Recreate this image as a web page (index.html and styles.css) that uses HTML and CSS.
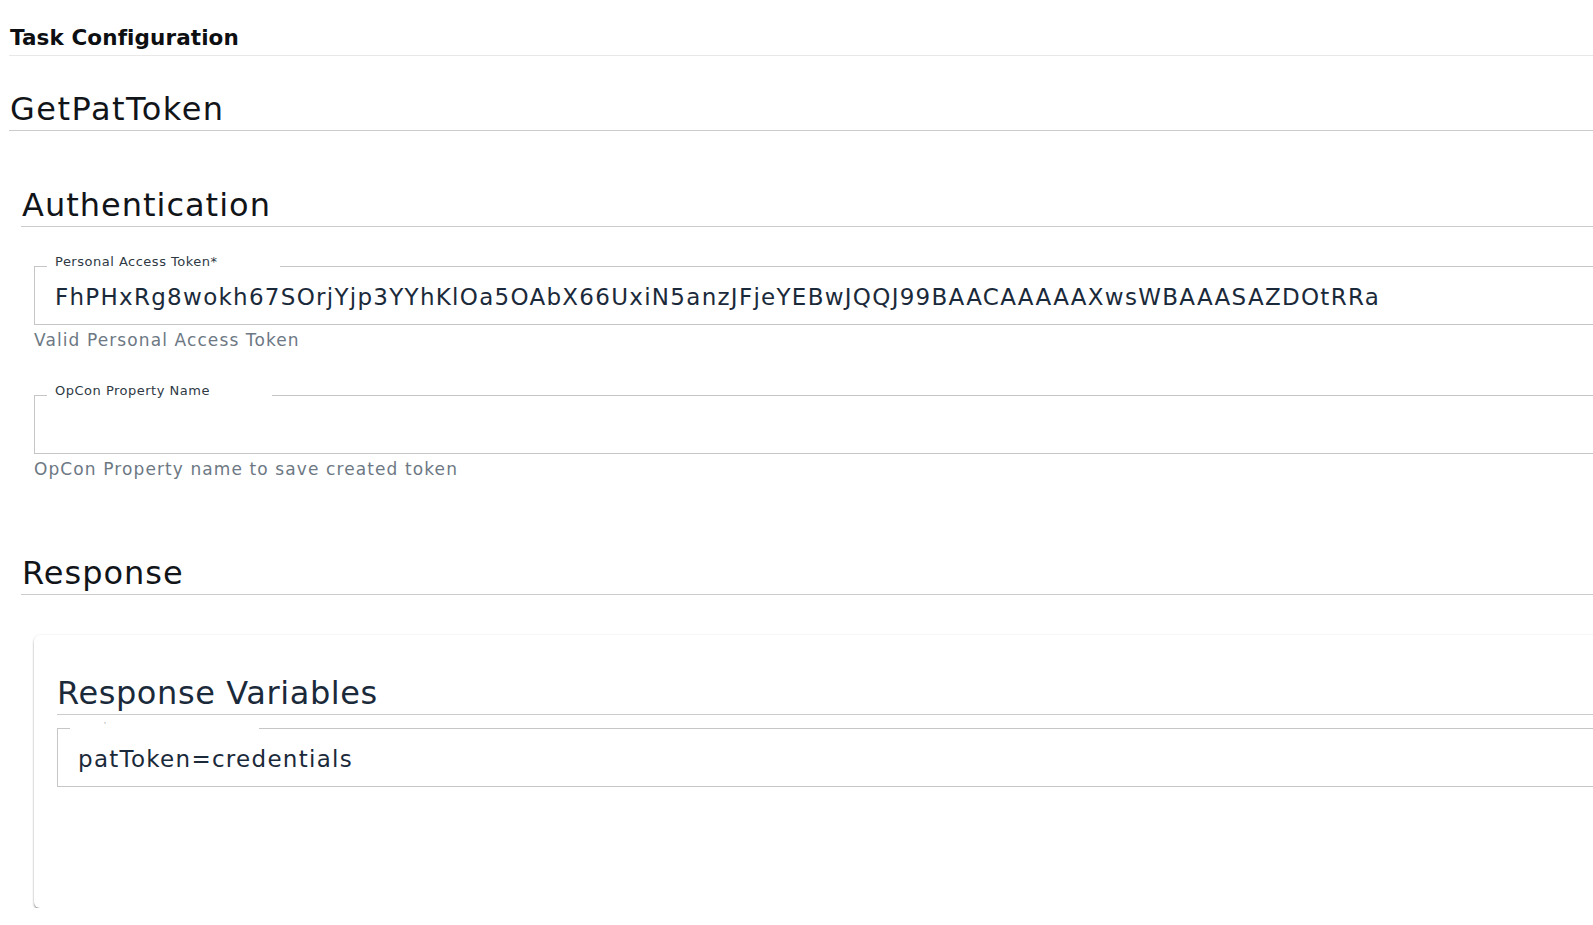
FILE: index.html
```html
<!DOCTYPE html>
<html lang="en">
<head>
<meta charset="utf-8">
<title>Task Configuration</title>
<link rel="stylesheet" href="styles.css">
</head>
<body>
<div class="page">
  <div class="page-title">Task Configuration</div>
  <h1 class="task-name">GetPatToken</h1>

  <section class="section">
    <h2 class="section-title">Authentication</h2>
    <div class="form-item">
      <div class="field">
        <span class="field-label label-pat">Personal Access Token*</span>
        <span class="field-value">FhPHxRg8wokh67SOrjYjp3YYhKlOa5OAbX66UxiN5anzJFjeYEBwJQQJ99BAACAAAAAXwsWBAAASAZDOtRRa</span>
      </div>
      <div class="hint">Valid Personal Access Token</div>
    </div>
    <div class="form-item form-item-2">
      <div class="field">
        <span class="field-label label-prop">OpCon Property Name</span>
        <span class="field-value"></span>
      </div>
      <div class="hint">OpCon Property name to save created token</div>
    </div>
  </section>

  <section class="section section-response">
    <h2 class="section-title">Response</h2>
    <div class="card">
      <h3 class="card-title">Response Variables</h3>
      <div class="field field-vars">
        <span class="field-label label-vars"><span class="tick">'</span></span>
        <span class="field-value">patToken=credentials</span>
      </div>
    </div>
  </section>
</div>
</body>
</html>
```

FILE: styles.css
```css
html, body {
  margin: 0;
  padding: 0;
  overflow: hidden;
  background: #ffffff;
}

body {
  font-family: "DejaVu Sans", "Liberation Sans", sans-serif;
  color: #111418;
}

.page {
  width: 1720px;
  padding-left: 9px;
}

.page-title {
  font-size: 21.5px;
  font-weight: bold;
  line-height: 26px;
  letter-spacing: 0.1px;
  padding: 25px 0 4px 1px;
  border-bottom: 1px solid #e8e8e8;
  color: #0d0f12;
}

.task-name {
  margin: 35px 0 0 0;
  padding: 0 0 3px 1px;
  font-size: 32px;
  font-weight: normal;
  line-height: 36px;
  letter-spacing: 1.5px;
  border-bottom: 1px solid #cbcbcb;
}

.section {
  margin-left: 12px;
  margin-top: 56px;
}

.section-title {
  margin: 0;
  padding: 0 0 3px 1px;
  font-size: 32px;
  font-weight: normal;
  line-height: 36px;
  letter-spacing: 1px;
  border-bottom: 1px solid #cbcbcb;
}

.form-item {
  margin-left: 13px;
  margin-top: 39px;
}

.form-item-2 {
  margin-top: 45px;
}

.field {
  position: relative;
  box-sizing: border-box;
  height: 59px;
  border: 1px solid #c6c6c6;
  padding: 2px 0 0 20px;
  display: flex;
  align-items: center;
}

.field-label {
  position: absolute;
  top: -13px;
  left: 12px;
  box-sizing: border-box;
  padding: 0 0 0 8px;
  background: #ffffff;
  font-size: 13px;
  line-height: 16px;
  letter-spacing: 0.5px;
  color: #2e3944;
}

.label-pat { width: 233px; }
.label-prop { width: 225px; }
.label-vars { width: 189px; }

.tick {
  display: inline-block;
  margin-left: 26px;
  font-size: 7px;
  color: #8a8f95;
  vertical-align: top;
  line-height: 18px;
}

.field-value {
  display: block;
  font-size: 23px;
  line-height: 26px;
  color: #1b2a3a;
  letter-spacing: 1.28px;
  white-space: nowrap;
}

.hint {
  margin-top: 5px;
  font-size: 17px;
  line-height: 20px;
  color: #6d7884;
  letter-spacing: 1.1px;
}

.section-response {
  margin-top: 76px;
}

.card {
  margin-top: 40px;
  margin-left: 13px;
  padding: 40px 0 121px 23px;
  background: #ffffff;
  border-radius: 6px;
  box-shadow: 0 2px 2px rgba(0, 0, 0, 0.36), 0 0 3px rgba(0, 0, 0, 0.08);
}

.card-title {
  margin: 0;
  padding: 0 0 3px 0;
  font-size: 32px;
  font-weight: normal;
  line-height: 36px;
  letter-spacing: 0.6px;
  color: #1b2a3a;
  border-bottom: 1px solid #cbcbcb;
}

.field-vars {
  margin-top: 13px;
}
```
